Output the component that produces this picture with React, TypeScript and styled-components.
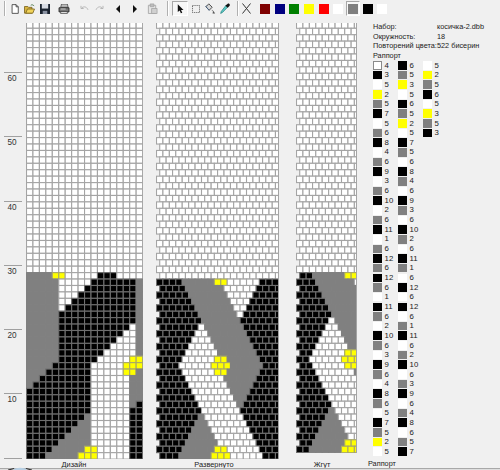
import React from "react";
import styled, { createGlobalStyle } from "styled-components";

type C = "w" | "k" | "g" | "y";
const COLORS: Record<C, string> = { w: "#ffffff", k: "#000000", g: "#808080", y: "#ffff00" };
const STROKES: Record<string, string> = { "#ffffff": "#a4a4a4", "#000000": "#6e6e6e", "#808080": "#808080", "#ffff00": "#a8a868" };

const RAPPORT: [C, number][] = [
  ["w",4],["k",3],["w",5],["y",2],["g",5],["k",7],["w",5],["g",6],["k",8],["w",4],["g",6],["k",9],["w",3],["g",6],["k",10],["w",2],["g",6],["k",11],["w",1],["g",6],["k",12],["g",6],["k",12],["g",6],["w",1],["k",11],["g",6],["w",2],["k",10],["g",6],["w",3],["k",9],["g",6],["w",4],["k",8],["g",6],["w",5],["k",7],["g",5],["y",2],["w",5],
  ["k",6],["g",5],["y",3],["w",5],["k",6],["g",5],["y",2],["w",5],["k",7],["g",5],["w",6],["k",8],["g",4],["w",6],["k",9],["g",3],["w",6],["k",10],["g",2],["w",6],["k",11],["g",1],["w",6],["k",12],["w",6],["k",12],["w",6],["g",1],["k",11],["w",6],["g",2],["k",10],["w",6],["g",3],["k",9],["w",6],["g",4],["k",8],["w",6],["g",5],["k",7],
  ["w",5],["y",2],["g",5],["k",6],["w",5],["y",3],["g",5],["k",3],
];

const BEADS: C[] = [...RAPPORT].reverse().flatMap(([c, n]) => Array<C>(n).fill(c));
const bead = (i: number): C => BEADS[((i % 522) + 522) % 522];

const CELL = 6.43;

type Cell = { x: number; y: number; fill: string };

function designCells(height: number): Cell[] {
  const out: Cell[] = [];
  const total = Math.ceil(height / CELL);
  for (let r = total - 1; r >= 0; r--) {
    for (let c = 0; c < 18; c++) {
      const i = r * 18 + c;
      out.push({ x: c * 6.45, y: height - (r + 1) * CELL, fill: i < 522 ? COLORS[bead(i)] : "#ffffff" });
    }
  }
  return out;
}

function brickCells(height: number, cols: number, filled: number, start: (r: number) => number, shifted: (r: number) => boolean): Cell[] {
  const out: Cell[] = [];
  const total = Math.ceil(height / CELL);
  for (let r = total - 1; r >= 0; r--) {
    const off = shifted(r) ? 0.5 : 0;
    const s = start(r);
    for (let c = 0; c < cols; c++) {
      out.push({
        x: (c + off) * CELL,
        y: height - (r + 1) * CELL,
        fill: r < filled ? COLORS[bead(s + c)] : "#ffffff",
      });
    }
  }
  return out;
}

const Chart: React.FC<{ width: number; height: number; cells: Cell[]; w?: number; edge?: boolean }> = ({ width, height, cells, w = CELL, edge }) => (
  <ChartSvg width={width} height={height} viewBox={`0 0 ${width} ${height}`}>
    {cells.map((c, i) => (
      <rect key={i} x={c.x + 0.5} y={c.y + 0.5} width={w} height={CELL} fill={c.fill} stroke={STROKES[c.fill]} strokeWidth={1.1} />
    ))}
    {edge && <line x1={width - 0.5} y1={0} x2={width - 0.5} y2={height} stroke="#a4a4a4" strokeWidth={1} />}
  </ChartSvg>
);

const GlobalStyle = createGlobalStyle`
  html, body { margin: 0; padding: 0; background: #f0f0f0; }
  body { font-family: "Liberation Sans", Arial, sans-serif; }
`;

const Page = styled.div`
  width: 500px;
  height: 470px;
  overflow: hidden;
  background: #f0f0f0;
  display: flex;
  flex-direction: column;
  color: #222;
  position: relative;
`;

const Toolbar = styled.div`
  height: 17px;
  box-sizing: border-box;
  display: flex;
  align-items: center;
  padding-left: 4px;
  background: #f0f0f0;
  flex: none;
`;

const ToolIcon = styled.span<{ $w?: number; $pressed?: boolean }>`
  width: ${(p) => p.$w ?? 15}px;
  height: 15px;
  flex: none;
  display: flex;
  align-items: center;
  justify-content: center;
  box-sizing: border-box;
  ${(p) => p.$pressed && "border: 1px solid; border-color: #a8a8a8 #fff #fff #a8a8a8; background: #f7f7f7;"}
`;

const ToolGap = styled.span<{ $w: number }>`
  width: ${(p) => p.$w}px;
  flex: none;
`;

const ToolSep = styled.span`
  width: 2px;
  height: 15px;
  flex: none;
  background: linear-gradient(90deg, #b0b0b0 50%, #ffffff 50%);
`;

const Swatch = styled.span<{ $c: string }>`
  display: block;
  width: 10px;
  height: 10px;
  background: ${(p) => p.$c};
`;

const Main = styled.div`
  flex: 1;
  display: flex;
  align-items: flex-start;
  padding-top: 5.6px;
`;

const Ruler = styled.div`
  width: 26px;
  flex: none;
  padding-top: 49.4px;
  box-sizing: border-box;
`;

const Tick = styled.div`
  height: 64.3px;
  box-sizing: border-box;
  margin-left: 4px;
  width: 18px;
  border-top: 1px solid #a0a0a0;
  font-size: 8.2px;
  line-height: 12px;
  text-align: center;
  padding-right: 2px;
  color: #333;
  &:last-child { height: 1px; }
`;

const ChartCol = styled.div<{ $w: number; $gap: number }>`
  width: ${(p) => p.$w}px;
  margin-right: ${(p) => p.$gap}px;
  flex: none;
  display: flex;
  flex-direction: column;
  align-items: center;
`;

const ChartSvg = styled.svg`
  display: block;
  flex: none;
`;

const Caption = styled.div<{ $top?: number; $shift: number }>`
  font-size: 7.4px;
  line-height: 11px;
  margin-top: ${(p) => p.$top ?? 0}px;
  padding-right: ${(p) => p.$shift}px;
  color: #222;
  white-space: nowrap;
`;

const Side = styled.div`
  flex: none;
  width: 143px;
  margin-top: -0.4px;
  display: flex;
  flex-direction: column;
  padding-left: 16px;
  box-sizing: border-box;
  font-size: 7.3px;
  line-height: 9.6px;
  color: #222;
`;

const InfoGrid = styled.div`
  display: grid;
  grid-template-columns: 64px 1fr;
  white-space: nowrap;
`;

const RapportTitle = styled.div`
  height: 9.6px;
`;

const RapportGrid = styled.div`
  display: grid;
  grid-auto-flow: column;
  grid-template-rows: repeat(41, 9.67px);
  grid-template-columns: repeat(3, 25px);
`;

const RapportItem = styled.div`
  display: flex;
  align-items: center;
  gap: 3px;
  font-size: 7.8px;
  line-height: 9.67px;
`;

const RapportSwatch = styled.span<{ $c: string; $outlined?: boolean }>`
  width: 8.6px;
  height: 8.6px;
  flex: none;
  background: ${(p) => p.$c};
  box-sizing: border-box;
  ${(p) => p.$outlined && "border: 1px solid #8a8a8a;"}
`;

const SideCaption = styled.div`
  margin-top: 2.6px;
  margin-left: -5px;
`;

const BottomEdge = styled.div`
  position: absolute;
  left: 0;
  right: 0;
  bottom: 0;
  height: 2px;
  background: linear-gradient(#a8a8a8 50%, #dedede 50%);
`;

const CornerArc = styled.svg`
  position: absolute;
  left: 8px;
  bottom: 0;
  display: block;
`;

const H = 435.6;

const PALETTE: { c: string; pressed?: boolean }[] = [
  { c: "#7f0000" }, { c: "#000080" }, { c: "#008000" }, { c: "#ffff00" }, { c: "#ff0000" },
  { c: "#ffffff" }, { c: "#808080", pressed: true }, { c: "#000000" }, { c: "#ffffff" },
];

export default function App() {
  const design = designCells(H);
  const unrolled = brickCells(H, 19, 28, (r) => Math.floor(18.5 * r), (r) => r % 2 === 0);
  const rope = brickCells(H - 6.43, 10, 28, (r) => Math.floor(18.5 * (r + 1)) - 17, (r) => r % 2 === 1);
  return (
    <Page>
      <GlobalStyle />
      <Toolbar>
        <ToolSep />
        <ToolGap $w={1} />
        <ToolIcon>
          <svg width="8" height="10" viewBox="0 0 11 13"><path d="M1.5.5h5.500l3 3v9h-8.500z" fill="#fff" stroke="#222" /><path d="M7 .5v3h3" fill="none" stroke="#222" /></svg>
        </ToolIcon>
        <ToolIcon>
          <svg width="11" height="10" viewBox="0 0 13 12"><path d="M.5 3h4l1 1h4v7h-9z" fill="#d8b440" stroke="#7a6420" /><path d="M2 11l2-5h8.500l-2 5z" fill="#f1d35a" stroke="#7a6420" /><path d="M8 1.500c1.500-1 3-.5 4 1" fill="none" stroke="#3a6a3a" /></svg>
        </ToolIcon>
        <ToolIcon>
          <svg width="10" height="10" viewBox="0 0 11 11"><path d="M0 0h11v11H0z" fill="#1c2430" /><path d="M2 0h7v5H2z" fill="#d8dce4" /><path d="M3 7.500h5V11H3z" fill="#8b93a3" /></svg>
        </ToolIcon>
        <ToolGap $w={4} />
        <ToolIcon>
          <svg width="12" height="10" viewBox="0 0 14 12"><path d="M4 0h7l1 4H3z" fill="#bbb" stroke="#333" strokeWidth=".8" /><path d="M1 4.500h12v5H1z" fill="#777" stroke="#222" /><path d="M3 9h8v2.500H3z" fill="#ddd" stroke="#333" strokeWidth=".8" /><path d="M3 6h6" stroke="#ddd" /></svg>
        </ToolIcon>
        <ToolGap $w={6} />
        <ToolIcon>
          <svg width="9" height="7" viewBox="0 0 10 8"><path d="M1 1v3h3M1.500 4C3 1.500 7 1 9 5.500" fill="none" stroke="#b4b4b4" strokeWidth="1.100" /></svg>
        </ToolIcon>
        <ToolIcon>
          <svg width="9" height="7" viewBox="0 0 10 8"><path d="M9 1v3H6M8.500 4C7 1.500 3 1 1 5.500" fill="none" stroke="#b4b4b4" strokeWidth="1.100" /></svg>
        </ToolIcon>
        <ToolGap $w={3} />
        <ToolIcon $w={16}>
          <svg width="5" height="8" viewBox="0 0 5 8"><path d="M4 0v8L0 4z" fill="#111" /></svg>
        </ToolIcon>
        <ToolIcon $w={16}>
          <svg width="5" height="8" viewBox="0 0 5 8"><path d="M1 0v8l4-4z" fill="#111" /></svg>
        </ToolIcon>
        <ToolGap $w={3} />
        <ToolIcon>
          <svg width="11" height="11" viewBox="0 0 12 12"><path d="M1.500 2.500h8v9h-8z" fill="#e4e4e4" stroke="#a8a8a8" /><path d="M3.500 1h4v3h-4z" fill="#bdbdbd" stroke="#9c9c9c" strokeWidth=".7" /><path d="M5 6h6v5.500H5z" fill="#d0d0d0" stroke="#a0a0a0" strokeWidth=".8" /></svg>
        </ToolIcon>
        <ToolGap $w={7} />
        <ToolSep />
        <ToolGap $w={3} />
        <ToolIcon $w={16} $pressed>
          <svg width="7" height="10" viewBox="0 0 9 12"><path d="M1 0v10l2.400-2.200L5 11.600l1.800-.8L5.200 7.200H8.400z" fill="#111" /></svg>
        </ToolIcon>
        <ToolIcon>
          <svg width="8" height="8" viewBox="0 0 10 10"><rect x=".5" y=".5" width="9" height="9" fill="none" stroke="#333" strokeDasharray="1.400 1.200" /></svg>
        </ToolIcon>
        <ToolIcon $w={14}>
          <svg width="11" height="11" viewBox="0 0 13 13"><path d="M4.500 1L8.500 5 5 8.500 1 4.500z" fill="#d8d8d8" stroke="#333" /><path d="M2 3l-1 1 4 5" fill="none" stroke="#4a6a90" /><path d="M8 8.500c1.500 0 2.500 2 1.500 3.500" fill="none" stroke="#777" /><path d="M10 9.500l2 3h-3z" fill="#555" /></svg>
        </ToolIcon>
        <ToolIcon>
          <svg width="10" height="11" viewBox="0 0 12 13"><path d="M7 3l2 2-6 6.200L.8 12.400 1.500 10z" fill="#5fc9c4" stroke="#177a78" strokeWidth=".8" /><path d="M6.500 2.800L9.200 5.500 11.300 3.400c.7-.7.7-1.600 0-2.300s-1.600-.7-2.300 0z" fill="#111" /></svg>
        </ToolIcon>
        <ToolGap $w={5} />
        <ToolSep />
        <ToolGap $w={1} />
        <ToolIcon $w={13}>
          <svg width="9" height="11" viewBox="0 0 9 11"><path d="M.5.5l8 10M8.500.5l-8 10" stroke="#333" fill="none" /></svg>
        </ToolIcon>
        <ToolGap $w={4.650} />
        {PALETTE.map((s, i) => (
          <ToolIcon key={i} $w={14.700} $pressed={s.pressed}>
            <Swatch $c={s.c} />
          </ToolIcon>
        ))}
      </Toolbar>

      <Main>
        <Ruler>
          {[60, 50, 40, 30, 20, 10, ""].map((n) => (
            <Tick key={n}>{n}</Tick>
          ))}
        </Ruler>
        <ChartCol $w={117} $gap={13}>
          <Chart width={117} height={H + 1} cells={design} w={6.45} />
          <Caption $shift={21}>Дизайн</Caption>
        </ChartCol>
        <ChartCol $w={123} $gap={17}>
          <Chart width={123} height={H + 1} cells={unrolled} edge />
          <Caption $shift={7}>Развернуто</Caption>
        </ChartCol>
        <ChartCol $w={61} $gap={0}>
          <Chart width={61} height={H + 1 - 6.43} cells={rope} edge />
          <Caption $top={6.43} $shift={9}>Жгут</Caption>
        </ChartCol>
        <Side>
          <InfoGrid>
            <span>Набор:</span><span>косичка-2.dbb</span>
            <span>Окружность:</span><span>18</span>
            <span>Повторений цвета:</span><span>522 бисерин</span>
          </InfoGrid>
          <RapportTitle>Раппорт</RapportTitle>
          <RapportGrid>
            {RAPPORT.map(([c, n], i) => (
              <RapportItem key={i}>
                <RapportSwatch $c={COLORS[c]} $outlined={i === 0} />
                {n}
              </RapportItem>
            ))}
          </RapportGrid>
          <SideCaption>Раппорт</SideCaption>
        </Side>
      </Main>
      <BottomEdge />
      <CornerArc width="24" height="4" viewBox="0 0 24 4">
        <path d="M0 4 L6 2.500 M18 2.500 L24 4" stroke="#333" strokeWidth="1.200" fill="none" />
        <path d="M5 4c2-3 12-3 14 0z" fill="#b8d0e4" />
      </CornerArc>
    </Page>
  );
}
